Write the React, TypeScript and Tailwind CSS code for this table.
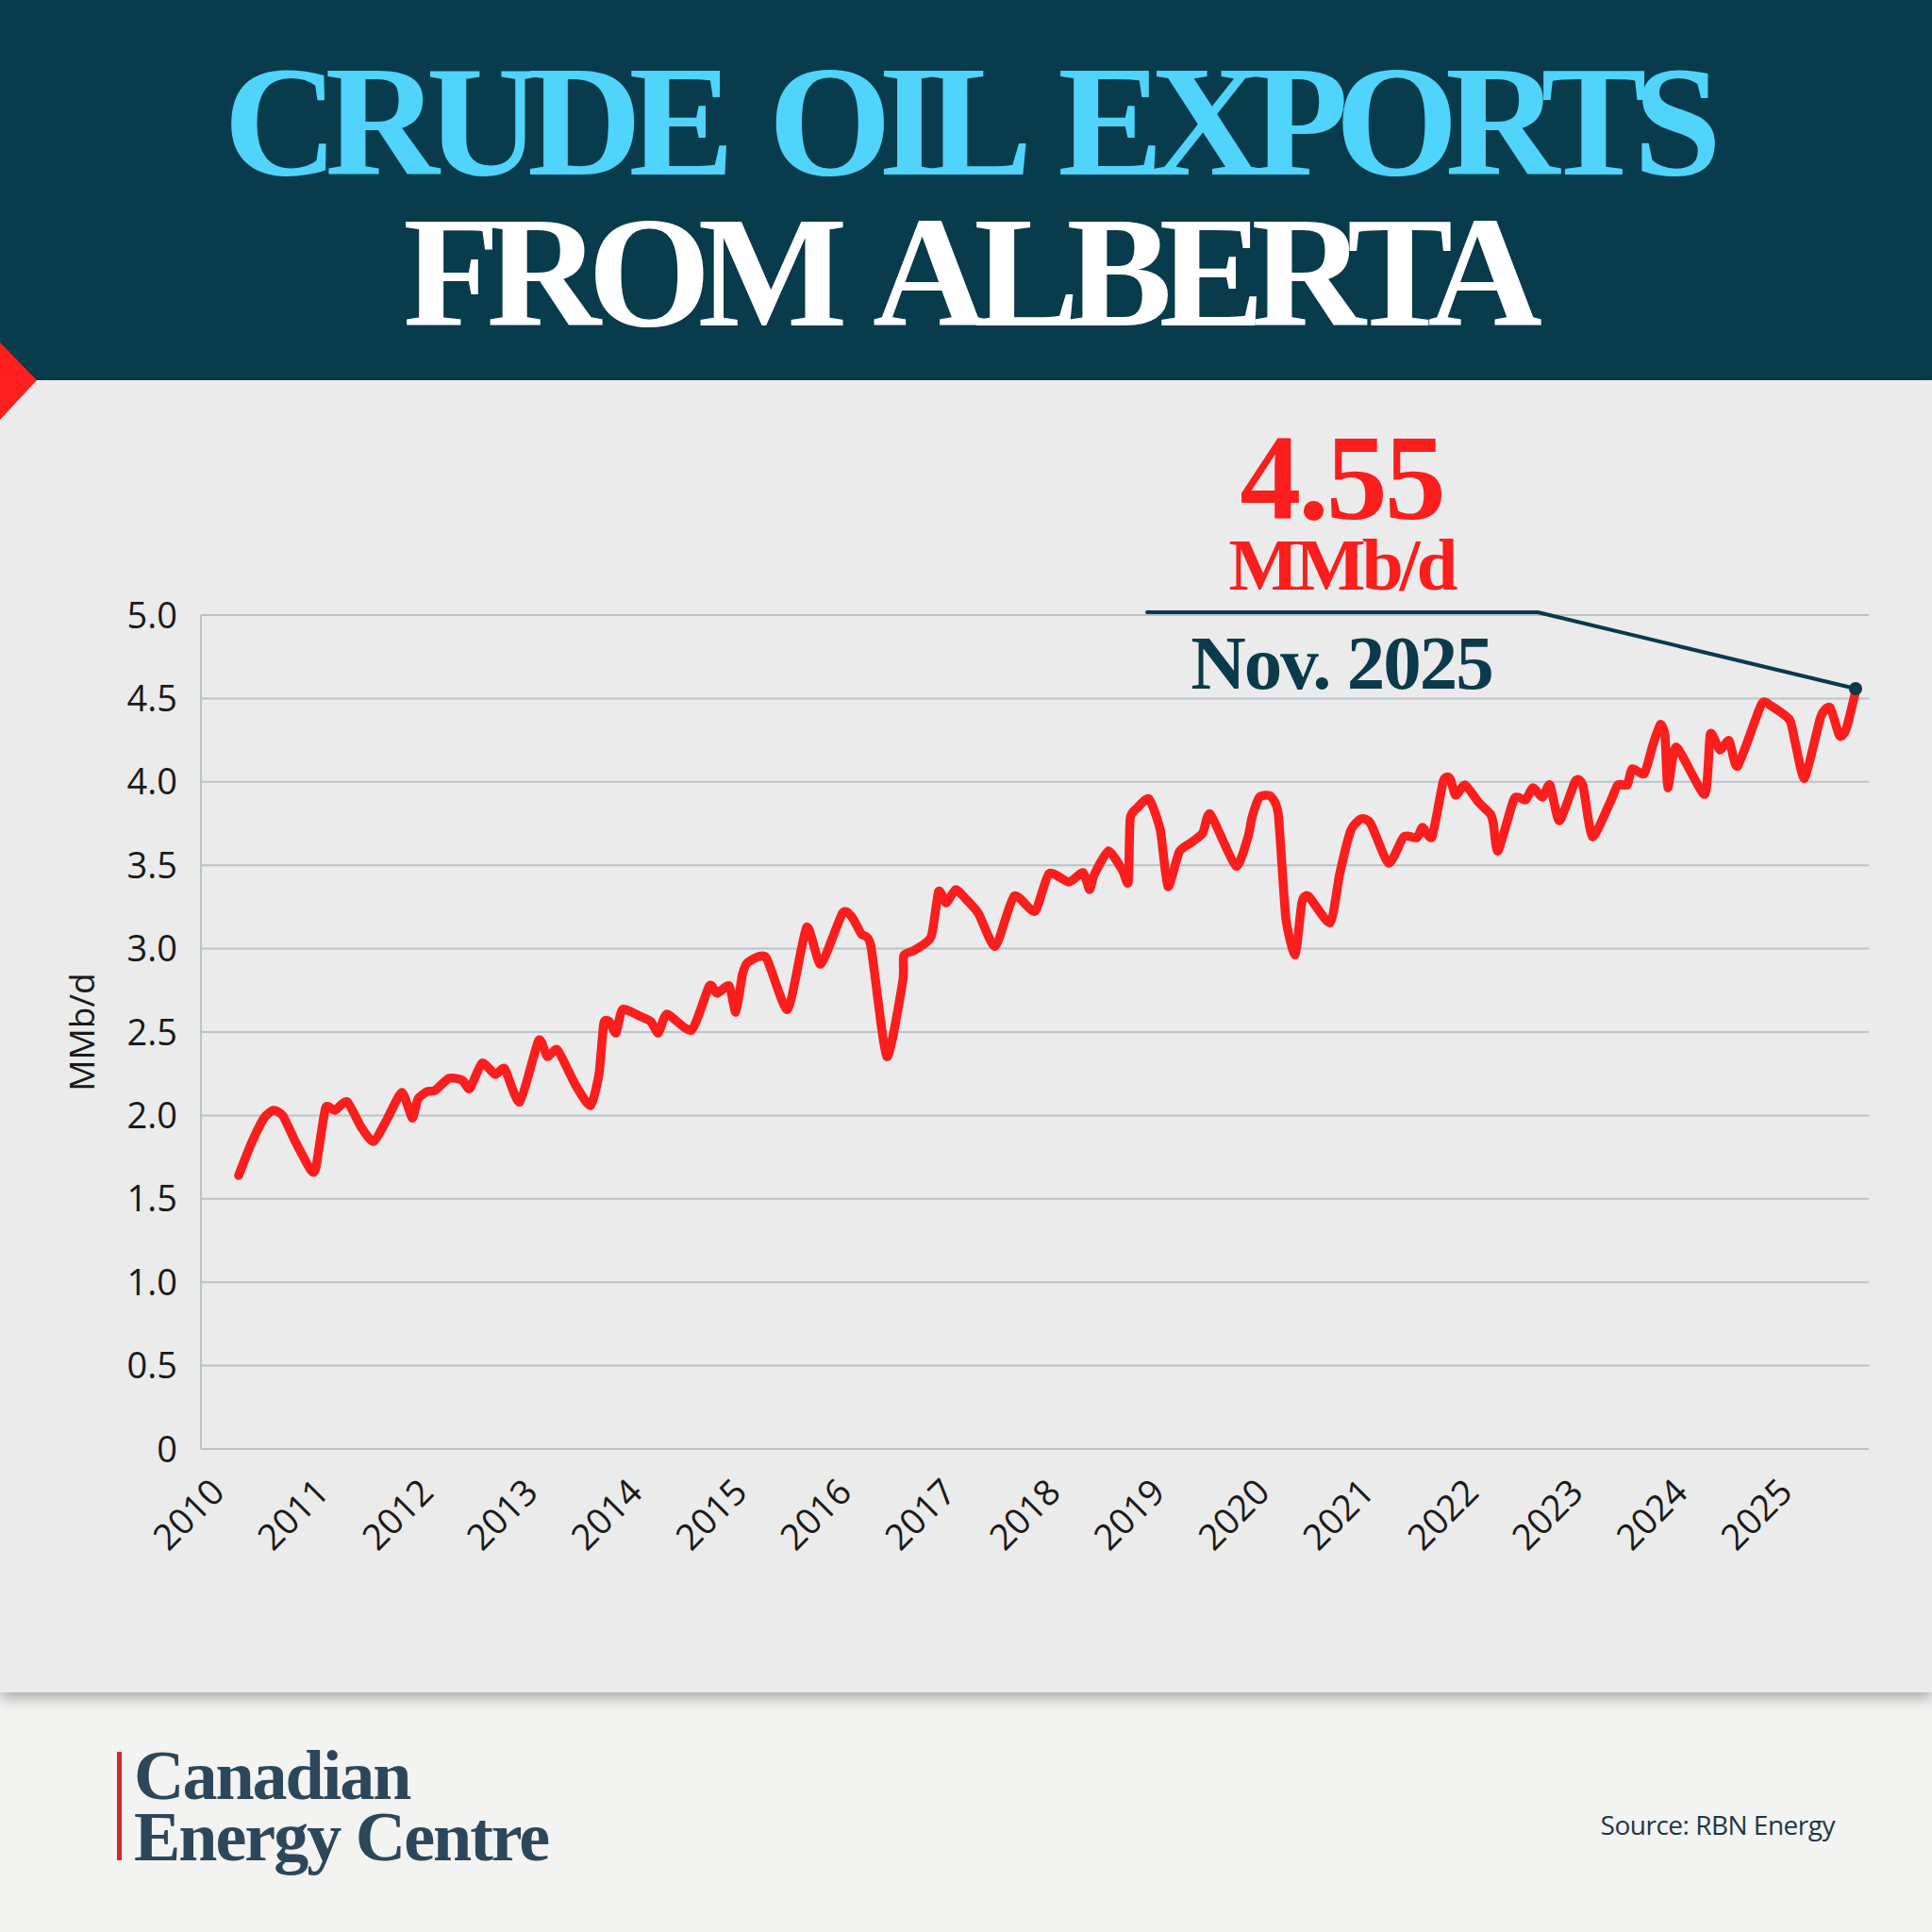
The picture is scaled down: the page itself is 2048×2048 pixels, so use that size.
import React from "react";

const GRID = [5, 4.5, 4, 3.5, 3, 2.5, 2, 1.5, 1, 0.5, 0];
const YEARS = Array.from({ length: 16 }, (_, i) => 2010 + i);

// plot geometry (page coordinates)
const X0 = 213;
const X1 = 1981;
const YEAR_W = 110.8;
const yOf = (v: number) => 1536 - v * 176.8;

// monthly exports traced from the source chart, [x, y]
const SERIES: [number, number][] = [
  [253, 1246], [266, 1213], [280, 1185], [290, 1177], [300, 1183], [313, 1210],
  [330, 1241], [335, 1237], [345, 1175], [355, 1177], [368, 1168], [383, 1195],
  [396, 1210], [410, 1187], [426, 1158], [437, 1185], [443, 1165], [453, 1157],
  [461, 1156], [476, 1143], [490, 1145], [498, 1154], [511, 1127], [525, 1139],
  [535, 1133], [551, 1168], [571, 1103], [580, 1120], [591, 1113], [610, 1150],
  [626, 1172], [635, 1138], [640, 1085], [646, 1083], [653, 1095], [660, 1070],
  [680, 1078], [690, 1083], [698, 1095], [707, 1075], [733, 1092], [752, 1045],
  [760, 1053], [773, 1045], [780, 1073], [787, 1033], [793, 1020], [812, 1015],
  [835, 1070], [855, 983], [870, 1022], [893, 968], [903, 972], [913, 990],
  [923, 1002], [940, 1120], [957, 1040], [958, 1013], [970, 1007], [987, 993],
  [995, 945], [1003, 957], [1013, 943], [1023, 952], [1037, 968], [1055, 1003],
  [1075, 950], [1097, 966], [1112, 926], [1133, 935], [1148, 925], [1155, 943],
  [1160, 927], [1175, 902], [1190, 923], [1196, 935], [1198, 868], [1205, 857],
  [1218, 847], [1230, 880], [1238, 940], [1250, 903], [1263, 893], [1275, 883],
  [1283, 863], [1310, 918], [1323, 887], [1327, 867], [1335, 845], [1347, 844],
  [1355, 863], [1363, 973], [1373, 1012], [1380, 957], [1387, 950], [1410, 978],
  [1420, 927], [1432, 880], [1443, 868], [1453, 873], [1472, 915], [1488, 887],
  [1502, 888], [1508, 877], [1518, 887], [1530, 828], [1537, 825], [1543, 843],
  [1553, 832], [1567, 850], [1580, 863], [1583, 873], [1588, 902], [1605, 847],
  [1617, 848], [1625, 835], [1635, 845], [1643, 832], [1653, 870], [1670, 828],
  [1678, 833], [1688, 887], [1707, 850], [1715, 832], [1725, 832], [1730, 815],
  [1743, 820], [1752, 790], [1760, 768], [1765, 780], [1768, 835], [1777, 792],
  [1807, 842], [1813, 778], [1823, 795], [1833, 785], [1842, 812], [1867, 747],
  [1877, 748], [1897, 763], [1903, 787], [1913, 825], [1930, 760], [1940, 750],
  [1950, 780], [1957, 773], [1967, 733],
];

// catmull-rom -> cubic bezier, slightly relaxed so spikes stay sharp
function smoothPath(pts: [number, number][], t = 0.6) {
  let d = `M${pts[0][0]},${pts[0][1]}`;
  for (let i = 0; i < pts.length - 1; i++) {
    const p0 = pts[i - 1] ?? pts[i];
    const p1 = pts[i];
    const p2 = pts[i + 1];
    const p3 = pts[i + 2] ?? p2;
    const c1x = p1[0] + ((p2[0] - p0[0]) / 6) * t;
    const c1y = p1[1] + ((p2[1] - p0[1]) / 6) * t;
    const c2x = p2[0] - ((p3[0] - p1[0]) / 6) * t;
    const c2y = p2[1] - ((p3[1] - p1[1]) / 6) * t;
    d += ` C${c1x.toFixed(1)},${c1y.toFixed(1)} ${c2x.toFixed(1)},${c2y.toFixed(1)} ${p2[0]},${p2[1]}`;
  }
  return d;
}

function Chart() {
  const sans = "'Open Sans', 'Liberation Sans', sans-serif";
  const serif = "'Liberation Serif', serif";
  return (
    <svg width={2048} height={1391} viewBox="0 403 2048 1391" className="block">
      {GRID.map((v) => (
        <g key={v}>
          <line x1={X0} x2={X1} y1={yOf(v)} y2={yOf(v)} stroke="#b9c4c8" strokeWidth={2} />
          <text x={188} y={yOf(v) + 13.5} textAnchor="end" fontFamily={sans} fontSize={38} fill="#1a1a1a">
            {v === 0 ? "0" : v.toFixed(1)}
          </text>
        </g>
      ))}
      <line x1={X0} x2={X0} y1={yOf(5)} y2={yOf(0)} stroke="#b9c4c8" strokeWidth={2} />

      <text x={100} y={1094} transform="rotate(-90 100 1094)" textAnchor="middle" fontFamily={sans} fontSize={37} fill="#1a1a1a">
        MMb/d
      </text>

      {YEARS.map((yr, i) => {
        const x = X0 + i * YEAR_W + 27;
        const y = 1584;
        return (
          <text key={yr} x={x} y={y} transform={`rotate(-45 ${x} ${y})`} textAnchor="end" fontFamily={sans} fontSize={38} fill="#1a1a1a">
            {yr}
          </text>
        );
      })}

      <path d={smoothPath(SERIES)} fill="none" stroke="#fc1d1d" strokeWidth={9.5} strokeLinejoin="round" strokeLinecap="round" />

      {/* callout */}
      <polyline points="1216,649 1630,649 1967,730" fill="none" stroke="#0b3a4a" strokeWidth={4} strokeLinecap="round" strokeLinejoin="round" />
      <circle cx={1967} cy={730} r={7} fill="#0b3a4a" />
      <text x={1422} y={550} textAnchor="middle" fontFamily={serif} fontWeight={700} fontSize={130} fill="#fc1d1d" letterSpacing={-3}>
        4.55
      </text>
      <text x={1422} y={625} textAnchor="middle" fontFamily={serif} fontWeight={700} fontSize={79} fill="#fc1d1d" letterSpacing={-4}>
        MMb/d
      </text>
      <text x={1422} y={730} textAnchor="middle" fontFamily={serif} fontWeight={700} fontSize={81} fill="#0b3a4a" letterSpacing={-2}>
        Nov. 2025
      </text>
    </svg>
  );
}

export default function App() {
  return (
    <div className="relative flex h-[2048px] w-[2048px] flex-col overflow-hidden bg-[#f3f3f2]">
      <header className="flex h-[403px] flex-col items-center bg-[#083b4b] pt-[48px] font-['Liberation_Serif',serif] text-[168px] font-bold leading-[160px] tracking-[-14px] [word-spacing:22px]">
        <div className="text-[#50d4fc]">CRUDE OIL EXPORTS</div>
        <div className="text-white">FROM ALBERTA</div>
      </header>

      <svg className="absolute left-0 top-[363px] z-20" width={40} height={84} viewBox="0 0 40 84">
        <polygon points="0,0 39,40 0,82" fill="#ff1f1f" />
      </svg>

      <section className="relative z-10 h-[1391px] bg-[#ebebeb] shadow-[0_6px_14px_rgba(0,0,0,0.3)]">
        <Chart />
      </section>

      <footer className="flex flex-1 items-start justify-between pl-[124px] pr-[103px] pt-[56px]">
        <div className="flex items-start">
          <div className="mt-[7px] h-[115px] w-[5px] bg-[#d4282b]" />
          <div className="ml-[13px] font-['Liberation_Serif',serif] text-[74px] font-bold leading-[65px] tracking-[-2px] text-[#2c4759]">
            <div>Canadian</div>
            <div>Energy Centre</div>
          </div>
        </div>
        <div className="mt-[70px] font-['Open_Sans',sans-serif] text-[28px] leading-none tracking-[-0.5px] text-[#1d3747]">
          Source: RBN Energy
        </div>
      </footer>
    </div>
  );
}
